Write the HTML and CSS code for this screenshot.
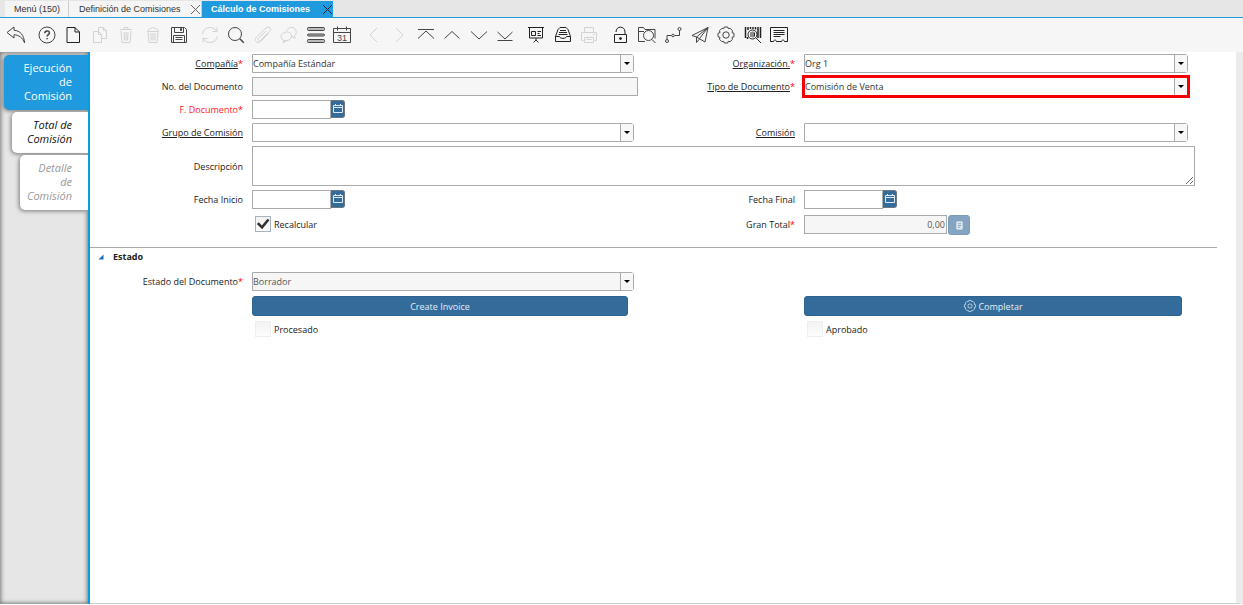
FILE: index.html
```html
<!DOCTYPE html>
<html lang="es">
<head>
<meta charset="utf-8">
<title>Cálculo de Comisiones</title>
<link rel="stylesheet" href="styles.css">
</head>
<body>
<nav class="tabs" aria-label="Ventanas">
  <a class="tab tab-menu" href="#">Menú (150)</a>
  <div class="tab tab-closable"><a href="#">Definición de Comisiones</a><button class="close" aria-label="Cerrar Definición de Comisiones"><svg viewBox="0 0 11 11"><path d="M1 1l9 9M10 1l-9 9"/></svg></button></div>
  <div class="tab tab-closable tab-active"><a href="#">Cálculo de Comisiones</a><button class="close" aria-label="Cerrar Cálculo de Comisiones"><svg viewBox="0 0 11 11"><path d="M1 1l9 9M10 1l-9 9"/></svg></button></div>
</nav>

<div class="toolbar" role="toolbar" aria-label="Acciones">
  <div class="group">
    <button class="tool" aria-label="Deshacer"><svg viewBox="0 0 20 20"><path d="M1 7.500L8 2v3.300c6 .2 10 4.700 10.600 12.700C16.500 12.500 13 10 8 9.800V13z"/></svg></button>
  </div>
  <div class="group group-six">
    <button class="tool" aria-label="Ayuda"><svg viewBox="0 0 20 20"><circle cx="10" cy="10" r="8"/><path class="bold" d="M7.800 8.200c0-3 4.600-3 4.600-.3 0 1.700-2.300 1.700-2.300 3.600M10.100 13v1.300"/></svg></button>
    <button class="tool dark" aria-label="Nuevo"><svg viewBox="0 0 20 20"><path d="M4 2.500h8l4.500 4.500v10.500H4zM12 2.500V7h4.500"/></svg></button>
    <button class="tool" disabled aria-label="Copiar"><svg viewBox="0 0 20 20"><path d="M3.500 6.500h5l3 3v8h-8zM8.500 6.500v3h3M8.500 6V2.500h5l3 3v8h-4.500M13.500 2.500v3h3"/></svg></button>
    <button class="tool" disabled aria-label="Eliminar"><svg viewBox="0 0 20 20"><path d="M4 4.500h12M8 4V2.500h4V4M5 6l1 11.500h8L15 6M8 7l.5 8.500M10 7v8.500M12 7l-.5 8.500"/></svg></button>
    <button class="tool" disabled aria-label="Eliminar selección"><svg viewBox="0 0 20 20"><path d="M4.500 6.500c0-2 1.500-2.500 3-2.500 1-2 4-2 5 0 1.500 0 3 .5 3 2.500zM5 6.500l1 11h8l1-11M7.800 8l.4 7.500M10 8v7.500M12.200 8l-.4 7.500"/></svg></button>
    <button class="tool" aria-label="Guardar"><svg viewBox="0 0 20 20"><path d="M2.500 2.500h13l2 2v13h-15zM5.500 2.500v5h9v-5M4.500 17.500v-7h11v7M6.500 12.500h7M6.500 14.500h7"/><path class="fill" d="M11.500 3.500h1v2h-1z"/></svg></button>
  </div>
  <div class="group group-six">
    <button class="tool" disabled aria-label="Refrescar"><svg viewBox="0 0 20 20"><path d="M2.500 9C3 3 12-.5 16.500 6M17 2.500V6.500h-4.500M17.500 11c-.5 6-9.500 9.500-14 3M3 17.500v-4h4.500"/></svg></button>
    <button class="tool" aria-label="Buscar"><svg viewBox="0 0 20 20"><circle cx="9" cy="9" r="6.500"/><path class="bold" d="M13.800 13.800l4 4"/></svg></button>
    <button class="tool" disabled aria-label="Adjunto"><svg viewBox="0 0 20 20"><path d="M13 6l-7.500 7.500c-1 1.500.8 3 2 2L16.500 6.500c3-3-1-6-3.500-3.500L3.500 12C.5 15 4 19.500 7.500 16.500L15 9"/></svg></button>
    <button class="tool" disabled aria-label="Chat"><svg viewBox="0 0 20 20"><path d="M8 5.500C9 2 14 1.500 16 4c2 2.500 1.500 5-.5 6.500l.5 3-3-2M12.500 11c0 6-10 6-10.500 1C2 6 12.500 5 12.500 11zM5 15l-1 2.500 4-2"/></svg></button>
    <button class="tool" aria-label="Vista de tabla"><svg viewBox="0 0 20 20"><g class="bars"><rect x="1.500" y="2.500" width="17" height="3" rx="1"/><rect x="1.500" y="9" width="17" height="2" rx="1"/><rect x="1.500" y="14.500" width="17" height="3" rx="1"/></g></svg></button>
    <button class="tool" aria-label="Calendario"><svg viewBox="0 0 20 20"><path d="M1.500 3.500h17v14h-17zM1.500 7.500h17M5.500 1.500v4M14.500 1.500v4"/><text x="10" y="15.800">31</text></svg></button>
  </div>
  <div class="group group-six">
    <button class="tool" disabled aria-label="Registro padre"><svg viewBox="0 0 20 20"><path d="M14 3L7 10l7 7"/></svg></button>
    <button class="tool" disabled aria-label="Registro detalle"><svg viewBox="0 0 20 20"><path d="M7 3l7 7-7 7"/></svg></button>
    <button class="tool" aria-label="Primero"><svg viewBox="0 0 20 20"><path d="M2 4.500h16M2 13.500L10 6l8 7.500"/></svg></button>
    <button class="tool" aria-label="Anterior"><svg viewBox="0 0 20 20"><path d="M2.500 13.500L10 6.500l7.500 7"/></svg></button>
    <button class="tool" aria-label="Siguiente"><svg viewBox="0 0 20 20"><path d="M2 6.500l8 7.500 8-7.500"/></svg></button>
    <button class="tool" aria-label="Último"><svg viewBox="0 0 20 20"><path d="M2.500 7l7.500 7 7.500-7M2.500 15.500h15"/></svg></button>
  </div>
  <div class="group group-three">
    <button class="tool dark" aria-label="Informe"><svg viewBox="0 0 20 20"><path d="M2 2.500h16M3.500 2.500v10.500h13V2.500M5.500 6.500h4v4h-4zM11.500 6.500h3.500M11.500 8.500h2M11.500 10.500h3.500M10 13v3M7.500 17.500L10 15l2.500 2.500"/></svg></button>
    <button class="tool dark" aria-label="Archivo"><svg viewBox="0 0 20 20"><path d="M2.500 11.500L5 4.500l2-2h6l2 2 2.500 7v5h-15zM2.500 11.500H6.500c.5 2.500 6.500 2.500 7 0h4M7 5.500h6M6 7.500h8M5.500 9.500h9"/></svg></button>
    <button class="tool" disabled aria-label="Imprimir"><svg viewBox="0 0 20 20"><path d="M5.500 7.500v-5h9v5M4.500 15.500H2.500v-8h15v8h-2M5.500 12.500h9v5h-9zM7.500 14.500h5M14 9.500h1.500"/></svg></button>
  </div>
  <div class="group group-seven">
    <button class="tool dark" aria-label="Bloquear"><svg viewBox="0 0 20 20"><path d="M4.500 9.500h12v8h-12zM6 7c0-6.500 9-6.500 9 0v2.500"/><circle class="fill" cx="10.500" cy="13.500" r="1"/></svg></button>
    <button class="tool" aria-label="Acercar"><svg viewBox="0 0 20 20"><path d="M8 16.500H1.500v-14h5l1.500 2h10v9M2 6.500h5M15 14.500l3.500 3.500"/><circle cx="11.500" cy="10.500" r="5"/></svg></button>
    <button class="tool" aria-label="Flujo de trabajo"><svg viewBox="0 0 20 20"><circle cx="4" cy="16" r="1.500"/><circle cx="16.500" cy="4" r="1.500"/><circle cx="10" cy="10.500" r="1.300"/><path d="M4 14.500v-4h4.500M11.500 10.500h5v-5"/></svg></button>
    <button class="tool" aria-label="Solicitudes"><svg viewBox="0 0 20 20"><path d="M18 2.500L2 10.500l4.500 1.500L15 17zM18 2.500L6.500 12v5.500l3-3.500M18 2.500L9.500 13.500"/></svg></button>
    <button class="tool" aria-label="Proceso"><svg viewBox="0 0 20 20"><path d="M8.300 2h3.400l.6 1.700 1.800-.4 2.400 2.400-.5 1.900 2 .7v3.400l-2 .7.5 1.900-2.400 2.400-1.800-.4-.6 1.700H8.300l-.6-1.700-1.800.4-2.400-2.400.5-1.900-2-.7V8.300l2-.7-.5-1.900 2.400-2.400 1.800.4z"/><circle cx="10" cy="10" r="3.200"/></svg></button>
    <button class="tool dark" aria-label="Información del producto"><svg viewBox="0 0 20 20"><path class="bold" d="M2.500 2v11M5 2v3M7.500 2v2M10 2v2M12.500 2v2.500M15 2v11M17.500 2v11M4.500 12v2"/><circle cx="9.500" cy="9.500" r="4.500"/><path d="M8 7v5M10 6.500v6M11.500 7.500v4M13 13l5 5"/></svg></button>
    <button class="tool dark" aria-label="Recibo"><svg viewBox="0 0 20 20"><path d="M1.500 16.500v-14h17v14h-3c-.5-2-2.500-2-3 0h-5c-.5-2-2.500-2-3 0z"/><path d="M1.500 16.500h3M7.500 16.500h5M15.500 16.500h3M4.500 5.500h11M4.500 7.500h11M4.500 9.500h11M4.500 11.500h7"/></svg></button>
  </div>
</div>

<div class="workspace">
  <nav class="side" aria-label="Pestañas">
    <a class="side-tab side-current" href="#">Ejecución<br>de<br>Comisión</a>
    <a class="side-tab side-child" href="#">Total de<br>Comisión</a>
    <a class="side-tab side-grandchild" href="#">Detalle<br>de<br>Comisión</a>
  </nav>

  <main class="main">
    <form class="form">
      <div class="grid">
        <label class="lbl link" for="client"><span>Compañía</span><i>*</i></label>
        <div class="combo"><select id="client"><option>Compañía Estándar</option></select></div>
        <label class="lbl link" for="org"><span>Organización.</span><i>*</i></label>
        <div class="combo combo-right"><select id="org"><option>Org 1</option></select></div>

        <label class="lbl row-start" for="docno">No. del Documento</label>
        <input class="text" id="docno" readonly>
        <label class="lbl link" for="doctype"><span>Tipo de Documento</span><i>*</i></label>
        <div class="combo combo-right highlight"><select id="doctype"><option>Comisión de Venta</option></select></div>

        <label class="lbl row-start required" for="docdate">F. Documento<i>*</i></label>
        <div class="date"><input id="docdate"><button type="button" aria-label="Elegir fecha"><svg viewBox="0 0 12 12"><path d="M1.500 2.500h9v7h-9zM1.500 4.500h9M3.500 1v2M8.500 1v2"/></svg></button></div>

        <label class="lbl row-start link" for="group"><span>Grupo de Comisión</span></label>
        <div class="combo"><select id="group"><option></option></select></div>
        <label class="lbl link" for="commission"><span>Comisión</span></label>
        <div class="combo combo-right"><select id="commission"><option></option></select></div>

        <label class="lbl row-start" for="description">Descripción</label>
        <textarea class="area" id="description"></textarea>

        <label class="lbl row-start" for="from">Fecha Inicio</label>
        <div class="date"><input id="from"><button type="button" aria-label="Elegir fecha"><svg viewBox="0 0 12 12"><path d="M1.500 2.500h9v7h-9zM1.500 4.500h9M3.500 1v2M8.500 1v2"/></svg></button></div>
        <label class="lbl" for="to">Fecha Final</label>
        <div class="date"><input id="to"><button type="button" aria-label="Elegir fecha"><svg viewBox="0 0 12 12"><path d="M1.500 2.500h9v7h-9zM1.500 4.500h9M3.500 1v2M8.500 1v2"/></svg></button></div>

        <label class="check check-first"><input type="checkbox" checked>Recalcular</label>
        <label class="lbl" for="total">Gran Total<i>*</i></label>
        <div class="amount"><input id="total" value="0,00" readonly><button type="button" disabled aria-label="Calculadora"><svg viewBox="0 0 10 10"><path d="M2 1h6v8H2z"/><path class="keys" d="M3 3h4M3 5h4M3 7h3"/></svg></button></div>
      </div>

      <h2 class="section"><svg viewBox="0 0 6 6"><path d="M5.500.5v5h-5z"/></svg>Estado</h2>

      <div class="grid grid-status">
        <label class="lbl" for="status">Estado del Documento<i>*</i></label>
        <div class="combo"><select id="status" disabled><option>Borrador</option></select></div>
        <button type="button" class="action action-left">Create Invoice</button>
        <button type="button" class="action action-right"><svg viewBox="0 0 20 20"><path d="M8.300 2h3.400l.6 1.700 1.800-.4 2.400 2.400-.5 1.900 2 .7v3.400l-2 .7.5 1.900-2.400 2.400-1.800-.4-.6 1.700H8.300l-.6-1.700-1.800.4-2.400-2.400.5-1.900-2-.7V8.300l2-.7-.5-1.900 2.400-2.400 1.800.4z"/><circle cx="10" cy="10" r="3"/></svg>Completar</button>
        <label class="check check-first"><input type="checkbox" disabled>Procesado</label>
        <label class="check check-second"><input type="checkbox" disabled>Aprobado</label>
      </div>
    </form>
  </main>
</div>
</body>
</html>
```

FILE: styles.css
```css
* {
  box-sizing: border-box;
}

body {
  margin: 0;
  min-height: 100vh;
  display: flex;
  flex-direction: column;
  background: #fff;
  color: #333;
  font-family: "Open Sans", "Noto Sans", sans-serif;
  font-size: 9px;
}

button,
input,
select,
textarea {
  margin: 0;
  font: inherit;
  color: inherit;
}

svg {
  display: block;
  fill: none;
  stroke: currentColor;
}

a {
  color: inherit;
  text-decoration: none;
}

/* Window tabs */
.tabs {
  display: flex;
  height: 18px;
  padding: 1px 0 0 5px;
  background: #e6e6e6;
  border-bottom: 1px solid #1f9ade;
  font-family: "Liberation Sans", sans-serif;
  line-height: 16px;
}

.tab {
  background: #f5f5f5;
  border-right: 1px solid #ccc;
}

.tab-menu {
  padding: 0 8px 0 9px;
}

.tab-closable {
  display: flex;
  align-items: center;
  justify-content: space-between;
  width: 133px;
  padding-left: 10px;
}

.tab-active {
  width: 131px;
  padding-left: 9px;
  background: #1f9ade;
  border: 0;
  color: #fff;
  font-weight: bold;
}

.close {
  padding: 0;
  border: 0;
  background: none;
  color: #666;
}

.tab-active .close {
  color: #123;
}

.close svg {
  width: 11px;
  height: 11px;
}

/* Toolbar */
.toolbar {
  display: flex;
  gap: 5px;
  height: 34px;
  padding: 0 3px 1px;
  align-items: center;
  background: #f6f6f6;
}

.group {
  display: flex;
  justify-content: space-between;
}

.group-six {
  width: 158px;
}

.group-three {
  width: 79px;
}

.group-seven {
  width: 185px;
}

.tool {
  display: grid;
  place-items: center;
  width: 26px;
  height: 26px;
  padding: 0;
  border: 0;
  background: none;
  color: #444;
}

.tool:disabled {
  color: #d2d2d2;
}

.dark {
  color: #222;
}

.tool svg {
  width: 20px;
  height: 20px;
}

.tool .bold {
  stroke-width: 1.5;
}

.tool .fill {
  fill: currentColor;
}

.bars {
  fill: #bbb;
}

.tool text {
  fill: currentColor;
  stroke: none;
  font: 9px "Liberation Sans", sans-serif;
  text-anchor: middle;
}

/* Work area */
.workspace {
  display: flex;
  flex: 1;
  margin-bottom: 1px;
}

.side {
  display: flex;
  flex-direction: column;
  align-items: flex-end;
  gap: 2px;
  width: 90px;
  padding-top: 3px;
  background: #e6e6e6;
  border-right: 2px solid #0a9bdc;
  box-shadow: inset 0 0 4px 1px #777;
  font-size: 11px;
  line-height: 14px;
}

.side-tab {
  padding: 6px 16px 7px 0;
  border-radius: 5px 0 0 5px;
  box-shadow: -1px 1px 4px #777;
  background: #fff;
  text-align: right;
  font-style: italic;
  clip-path: inset(-6px 0 -6px -6px);
}

.side-current {
  width: 84px;
  background: #1f9ade;
  color: #fff;
  font-style: normal;
  font-weight: 500;
}

.side-child {
  width: 76px;
  color: #111;
}

.side-grandchild {
  width: 68px;
  color: #999;
}

.main {
  flex: 1;
  padding-top: 2px;
  border-right: 7px solid #ebebeb;
  border-bottom: 1px solid #ccc;
}

.grid {
  display: grid;
  grid-template-columns: 162fr 386fr 166fr 391fr 41fr;
  row-gap: 4px;
  align-items: center;
}

.grid-status {
  row-gap: 5px;
}

.lbl {
  padding-right: 9px;
  text-align: right;
  white-space: nowrap;
  color: #222;
}

.row-start {
  grid-column: 1;
}

.lbl i {
  color: #f00;
  font-style: normal;
}

.link span {
  text-decoration: underline;
}

.lbl.required {
  color: #f22;
}

.combo {
  position: relative;
  height: 19px;
  margin-right: 4px;
}

.combo-right {
  margin-right: 7px;
}

.combo select {
  display: block;
  width: 100%;
  height: 19px;
  padding: 0;
  border: 1px solid #aaa;
  border-radius: 0 3px 3px 0;
  background: #fff;
  appearance: none;
}

.combo select:disabled {
  background: #f6f6f6;
  color: #555;
  opacity: 1;
}

.combo::before {
  content: "";
  position: absolute;
  top: 1px;
  right: 1px;
  width: 12px;
  height: 17px;
  border-left: 1px solid #aaa;
  background: #f7f7f7;
  pointer-events: none;
}

.combo::after {
  content: "";
  position: absolute;
  top: 8px;
  right: 4px;
  border: 3px solid transparent;
  border-top-color: #000;
  border-bottom: 0;
  pointer-events: none;
}

.highlight {
  outline: 3px solid #f50000;
  outline-offset: -1px;
}

.text,
.date input,
.amount input {
  min-width: 0;
  height: 19px;
  padding: 0 1px;
  border: 1px solid #aaa;
}

.text {
  width: 100%;
}

.text:read-only,
.amount input {
  background: #f6f6f6;
  color: #555;
}

.date {
  display: flex;
}

.date input {
  width: 79px;
}

.date button {
  display: grid;
  place-items: center;
  width: 14px;
  height: 18px;
  padding: 0;
  border: 1px solid #6a7680;
  border-left: 0;
  border-radius: 0 3px 3px 0;
  background: #336b9b;
  color: #dcebf7;
}

.date svg {
  width: 12px;
  height: 12px;
}

.area {
  grid-column: 2 / 5;
  width: 100%;
  height: 40px;
  padding: 1px;
  border: 1px solid #aaa;
  background: #fff;
  display: block;
}

.check {
  display: flex;
  align-items: center;
  gap: 3px;
  padding-left: 3px;
  color: #222;
}

.check-first {
  grid-column: 2;
}

.check-second {
  grid-column: 4;
}

.check input {
  appearance: none;
  width: 16px;
  height: 16px;
  border: 1px solid #a9b3bd;
  background: linear-gradient(#f2f2f2, #fdfdfd);
}

.check input:disabled {
  border-color: #eee;
}

.check input:checked::before {
  content: "";
  display: block;
  height: 14px;
  background: #333;
  clip-path: polygon(6% 50%, 20% 38%, 42% 60%, 82% 12%, 96% 24%, 44% 88%);
}

.amount {
  display: flex;
  align-items: flex-start;
  gap: 1px;
  padding-top: 2px;
}

.amount input {
  width: 143px;
  text-align: right;
}

.amount button {
  display: grid;
  place-items: center;
  width: 22px;
  height: 20px;
  padding: 0;
  border: 1px solid #7b9cba;
  border-radius: 3px;
  background: #84a4c1;
  color: #e3ebf2;
}

.amount svg {
  width: 9px;
  height: 9px;
}

.amount path {
  fill: currentColor;
}

.amount .keys {
  stroke: #84a4c1;
}

.section {
  display: flex;
  align-items: baseline;
  gap: 9px;
  height: 17px;
  margin: 12px 19px 8px 0;
  padding: 2px 0 0 8px;
  border-top: 1px solid #aaa;
  font-size: 9px;
  color: #222;
}

.section svg {
  width: 6px;
  height: 6px;
  fill: #1b6fc0;
  stroke: none;
}

.action {
  display: flex;
  align-items: center;
  justify-content: center;
  gap: 1px;
  height: 20px;
  padding: 0;
  border: 1px solid #2c6390;
  border-radius: 3px;
  background: #336b9b;
  color: #e6eef5;
}

.action svg {
  width: 14px;
  height: 14px;
}

.action-left {
  grid-column: 2;
  margin-right: 10px;
}

.action-right {
  grid-column: 4;
  margin-right: 13px;
}
```
